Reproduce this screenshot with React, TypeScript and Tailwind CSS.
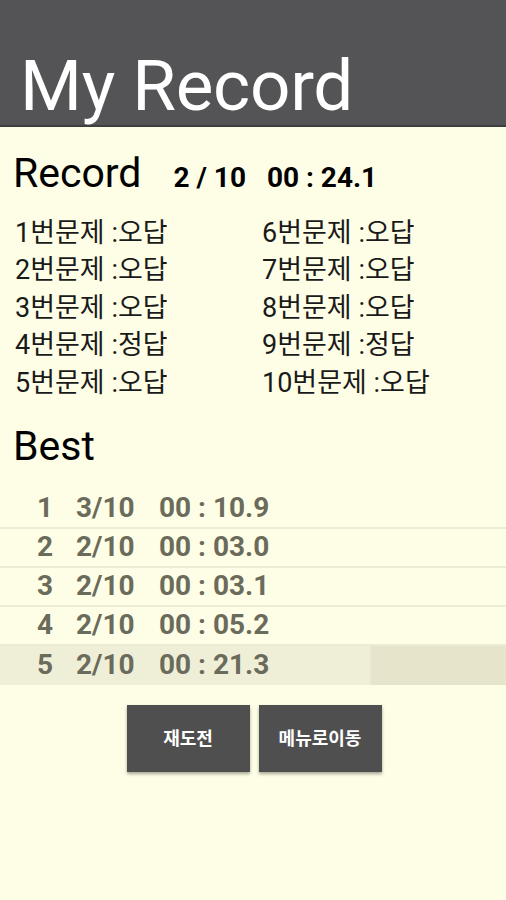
import React from "react";

const font = { fontFamily: 'Roboto, "Noto Sans CJK KR", sans-serif' };

const left = ["1번문제 :오답", "2번문제 :오답", "3번문제 :오답", "4번문제 :정답", "5번문제 :오답"];
const right = ["6번문제 :오답", "7번문제 :오답", "8번문제 :오답", "9번문제 :정답", "10번문제 :오답"];
const best = [
  ["1", "3/10", "00 : 10.9"],
  ["2", "2/10", "00 : 03.0"],
  ["3", "2/10", "00 : 03.1"],
  ["4", "2/10", "00 : 05.2"],
  ["5", "2/10", "00 : 21.3"],
];

export default function App() {
  return (
    <div className="w-[506px] h-[900px] bg-[#fefee6] overflow-hidden flex flex-col" style={font}>
      <div className="h-[127px] bg-[#545456] border-b-2 border-[#3e3e3e] flex items-end px-[20px] shrink-0">
        <div className="text-white text-[71px] leading-none pb-[4px] tracking-[-0.3px]">My Record</div>
      </div>
      <div className="flex items-baseline px-[13px] pt-[26px]">
        <span className="text-[41px] leading-none text-black">Record</span>
        <span className="ml-[32px] text-[28px] font-bold text-black leading-none whitespace-pre">2 / 10   00 : 24.1</span>
      </div>
      <div className="grid grid-cols-[247px_1fr] px-[15px] pt-[20px]">
        <div className="flex flex-col">
          {left.map((t) => (
            <div key={t} className="h-[37.6px] flex items-center text-[27px] text-[#1a1a1a]">{t}</div>
          ))}
        </div>
        <div className="flex flex-col">
          {right.map((t) => (
            <div key={t} className="h-[37.6px] flex items-center text-[27px] text-[#1a1a1a]">{t}</div>
          ))}
        </div>
      </div>
      <div className="px-[13px] pt-[24px] text-[41px] leading-none text-black">Best</div>
      <div className="flex flex-col pt-[23px]">
        {best.map((r, i) => (
          <div
            key={r[0]}
            className={
              "h-[39px] flex items-center text-[28px] font-bold text-[#6b6b5c] " +
              (i < 4 ? "border-b-2 border-[#ececd4] " : "") +
              (i === 4 ? "bg-[linear-gradient(to_right,#efefd8_0px,#efefd8_370px,#e6e5cb_371px)]" : "")
            }
          >
            <span className="w-[37px]"></span>
            <span className="w-[39px]">{r[0]}</span>
            <span className="w-[83px]">{r[1]}</span>
            <span>{r[2]}</span>
          </div>
        ))}
      </div>
      <div className="flex justify-center gap-[9px] pt-[20px] pl-[2px]">
        <button className="w-[123px] h-[67px] bg-[#4f4f4f] text-white text-[18px] font-bold shadow-[0_2px_3px_rgba(0,0,0,0.35)]">재도전</button>
        <button className="w-[123px] h-[67px] bg-[#4f4f4f] text-white text-[18px] font-bold shadow-[0_2px_3px_rgba(0,0,0,0.35)]">메뉴로이동</button>
      </div>
    </div>
  );
}
